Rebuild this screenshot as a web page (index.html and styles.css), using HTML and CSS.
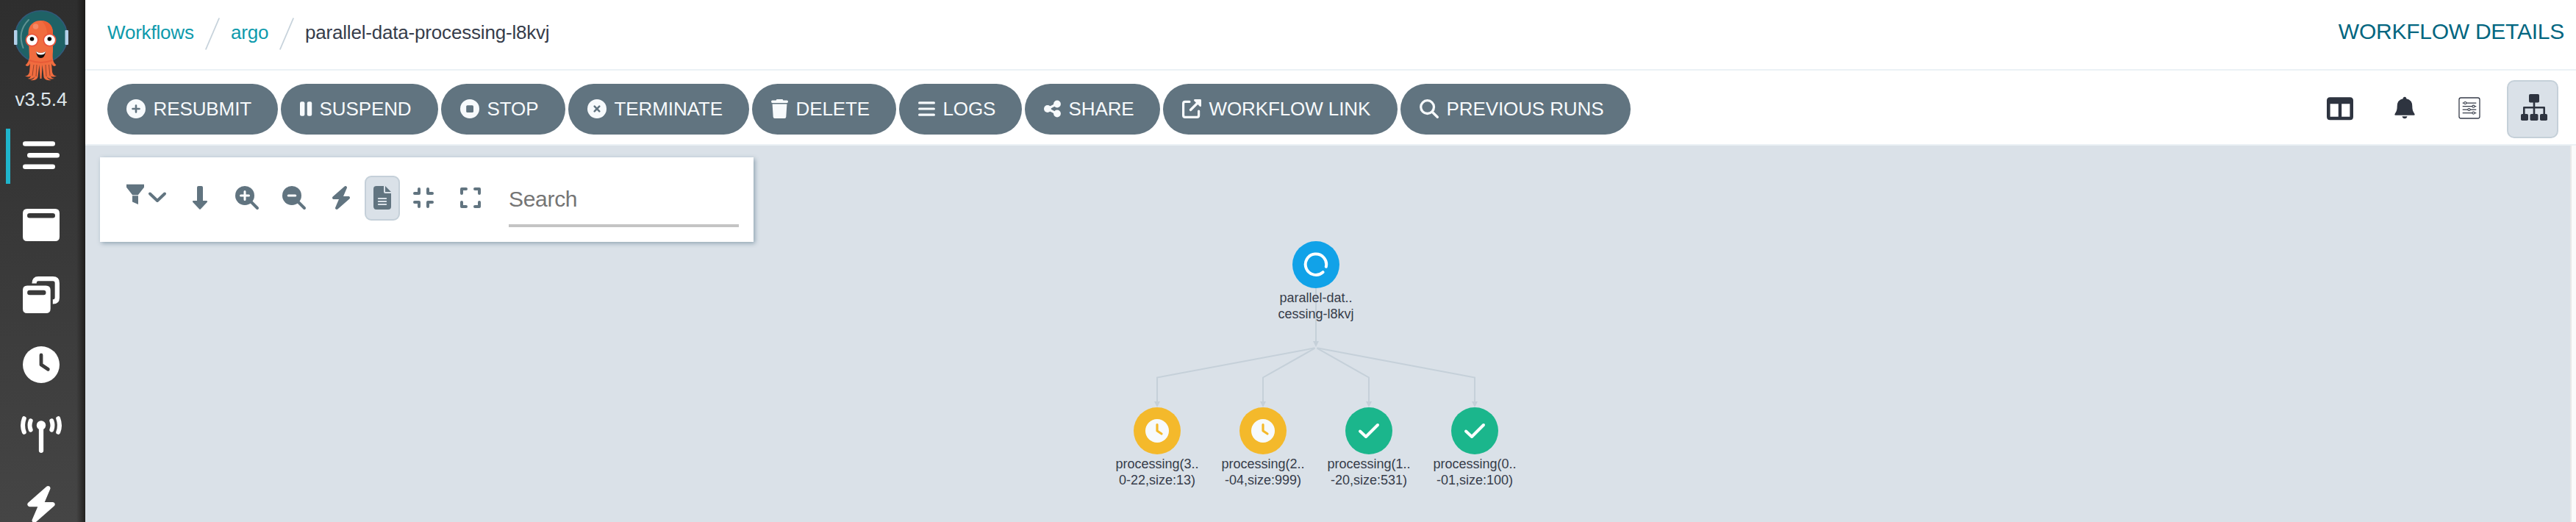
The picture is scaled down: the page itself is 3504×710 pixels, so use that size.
FILE: index.html
```html
<!DOCTYPE html>
<html lang="en">
<head>
<meta charset="utf-8">
<title>parallel-data-processing-l8kvj</title>
<link rel="stylesheet" href="styles.css">
</head>
<body>
<div class="layout">
  <aside class="sidebar">
    <svg class="logo" viewBox="0 0 112 120">
      <circle cx="56" cy="50" r="35.5" fill="#1f6266" stroke="#32597a" stroke-width="1.6"/>
      <path d="M39 27Q23 43 31.500 65" fill="none" stroke="#5f9292" stroke-width="2" stroke-linecap="round"/>
      <rect x="19" y="41" width="4.500" height="20" rx="1" fill="#b3d0ea"/>
      <rect x="88.500" y="41" width="4.500" height="20" rx="1" fill="#b3d0ea"/>
      <path d="M38.500 45C38.500 34 46 28 55.500 28S72 34 72 45V70C71 80 72 85 76.500 88.500L74.500 90Q71 90 70 86L71 98Q72 103 77 103.500Q72 105.500 69 103.500Q70 106.500 74 107Q67 108.500 63.500 104Q65 108 70 109Q62 110.500 59.500 105L57.500 88L56.500 107H54.500L53.500 88L51.500 105Q49 110.500 41 109Q46 108 47.500 104Q44 108.500 37.500 107Q41 106.500 42 103.500Q39 105.500 34 103.500Q39 103 40 98L41 86Q40 90 36.500 90L34.500 88.500Q39 85 40 78Z" fill="#f06c3f"/>
      <path d="M55.500 28Q72 29 72 45V50H64.500Q64 33 55.500 28Z" fill="#ec5f34"/>
      <path d="M40 82Q56 88 71 82" fill="none" stroke="#e85b37" stroke-width="2"/>
      <path d="M46 88L44 103M50 88L49 104M62 88L63 104M66.500 88L68 103" stroke="#98442c" stroke-width="1" fill="none"/>
      <circle cx="48.500" cy="36" r="3.800" fill="#f48a66"/>
      <circle cx="43.500" cy="54.500" r="8.200" fill="#fff" stroke="#e9533b" stroke-width="1.700"/>
      <circle cx="67.500" cy="54.500" r="8.200" fill="#fff" stroke="#e9533b" stroke-width="1.700"/>
      <circle cx="43.500" cy="53" r="2.800"/><circle cx="67.300" cy="53" r="2.800"/>
      <path d="M49 70Q55.500 74 62 70Q61 79 55.500 79T49 70Z" fill="#150d0b"/>
      <path d="M49 70Q55.500 74 62 70Q61 74.500 55.500 74.500T49 70Z" fill="#fff"/>
    </svg>
    <div class="version">v3.5.4</div>
    <nav class="nav">
      <a class="nav-item active"><svg viewBox="0 0 50 50"><path d="M3.300 9.500H40.700M9.300 25.200H46.700M3.300 40.800H40.700" stroke="#fff" stroke-width="6.600" stroke-linecap="round"/></svg></a>
      <a class="nav-item"><svg viewBox="0 0 50 50"><path fill="#fff" fill-rule="evenodd" d="M6 3H44Q50 3 50 9V41Q50 47 44 47H6Q0 47 0 41V9Q0 3 6 3ZM9.300 9A3.200 3.200 0 0 0 9.300 15.600H40.700A3.200 3.200 0 0 0 40.700 9Z"/></svg></a>
      <a class="nav-item"><svg viewBox="0 0 50 50"><path d="M15.600 9.500V9Q15.600 3.200 21 3.200H41Q46.800 3.200 46.800 9V29Q46.800 34.400 41.200 34.400H40.800" fill="none" stroke="#fff" stroke-width="6.300"/><path fill="#fff" fill-rule="evenodd" d="M6 12.500H31.500Q37.700 12.500 37.700 18.500V44Q37.700 50 31.500 50H6Q0 50 0 44V18.500Q0 12.500 6 12.500ZM9.300 18.800A3.100 3.100 0 0 0 9.300 25.200H28.300A3.100 3.100 0 0 0 28.300 18.800Z"/></svg></a>
      <a class="nav-item"><svg viewBox="0 0 50 50"><circle cx="25" cy="25" r="25" fill="#fff"/><path d="M25 12V25L34.300 31.300" fill="none" stroke="#3c3c3c" stroke-width="4.800" stroke-linecap="round" stroke-linejoin="round"/></svg></a>
      <a class="nav-item"><svg viewBox="0 0 50 50"><circle cx="25" cy="12.500" r="6.200" fill="#fff"/><path d="M25 12V46.800" stroke="#fff" stroke-width="6.300" stroke-linecap="round"/><path d="M10.700 6.400Q8.300 12.500 10.700 18.600M39.300 6.400Q41.700 12.500 39.300 18.600M1.800 3.200Q-1.700 12.500 1.800 21.800M48.200 3.200Q51.700 12.500 48.200 21.800" fill="none" stroke="#fff" stroke-width="6" stroke-linecap="round"/></svg></a>
      <a class="nav-item"><svg viewBox="-32 0 512 512"><path fill="#fff" d="M349.400 44.600c5.900-13.700 1.500-29.700-10.600-38.500s-28.600-8-39.900 1.800l-256 224c-10 8.800-13.600 22.900-8.900 35.300S50.700 288 64 288H175.500L98.600 467.400c-5.900 13.700-1.500 29.700 10.600 38.500s28.600 8 39.900-1.800l256-224c10-8.800 13.600-22.900 8.900-35.300s-16.600-20.700-30-20.700H272.500L349.400 44.600z"/></svg></a>
    </nav>
  </aside>
  <main class="main">
    <header class="topbar">
      <div class="crumbs">
        <a class="crumb crumb-root">Workflows</a>
        <svg class="slash" viewBox="0 0 20 44"><path d="M.800 43.500L19.200.500" stroke="#c6d2db" stroke-width="1.800"/></svg>
        <a class="crumb crumb-ns">argo</a>
        <svg class="slash" viewBox="0 0 20 44"><path d="M.800 43.500L19.200.500" stroke="#c6d2db" stroke-width="1.800"/></svg>
        <span class="crumb current">parallel-data-processing-l8kvj</span>
      </div>
      <div class="title">WORKFLOW DETAILS</div>
    </header>
    <div class="toolbar">
      <div class="actions">
        <button class="btn resubmit"><svg viewBox="0 0 26 26"><circle cx="13" cy="13" r="13"/><path class="cut" d="M13 8.500V17.500M8.500 13H17.500"/></svg><span>RESUBMIT</span></button>
        <button class="btn suspend"><svg class="w16" viewBox="0 0 16 26"><rect x="0" y="3.200" width="6.400" height="19.600" rx="2.200"/><rect x="9.800" y="3.200" width="6.400" height="19.600" rx="2.200"/></svg><span>SUSPEND</span></button>
        <button class="btn stop"><svg viewBox="0 0 26 26"><circle cx="13" cy="13" r="13"/><rect x="8.200" y="8.200" width="9.800" height="9.800" rx="1.600" fill="#617480"/></svg><span>STOP</span></button>
        <button class="btn terminate"><svg viewBox="0 0 26 26"><circle cx="13" cy="13" r="13"/><path class="cut" d="M9.700 9.700L16.300 16.300M16.300 9.700L9.700 16.300"/></svg><span>TERMINATE</span></button>
        <button class="btn delete"><svg class="w23" viewBox="0 0 23 26"><path d="M7.500 0H15.500L16.400 1.600H21.500Q23 1.600 23 3.300T21.500 5H1.500Q0 5 0 3.300T1.500 1.600H6.600ZM1.600 6.500H21.400L20.300 24Q20.100 26 18.200 26H4.800Q2.900 26 2.700 24Z"/></svg><span>DELETE</span></button>
        <button class="btn logs"><svg class="w23" viewBox="0 0 23 26"><path d="M1.600 4.900H21.400M1.600 13H21.400M1.600 21.200H21.400" stroke="#f7fafc" stroke-width="3.200" stroke-linecap="round"/></svg><span>LOGS</span></button>
        <button class="btn share"><svg class="w23" viewBox="0 0 23 26"><path d="M18 6.200L5 13L18 19.800" fill="none" stroke="#f7fafc" stroke-width="3.200"/><circle cx="18" cy="6.500" r="4.900"/><circle cx="4.900" cy="13" r="4.900"/><circle cx="18" cy="19.500" r="4.900"/></svg><span>SHARE</span></button>
        <button class="btn link"><svg viewBox="0 0 26 26"><path d="M10 3.400H4Q1.600 3.400 1.600 5.800V22Q1.600 24.400 4 24.400H20.200Q22.600 24.400 22.600 22V16" fill="none" stroke="#f7fafc" stroke-width="3.200" stroke-linecap="round"/><path d="M11.500 14.500L22 4" stroke="#f7fafc" stroke-width="3.300" stroke-linecap="round"/><path d="M17 0H24.600Q26 0 26 1.400V9Q25.600 10.800 24 9.800L16.200 2Q15.400.400 17 0Z"/></svg><span>WORKFLOW LINK</span></button>
        <button class="btn previous"><svg viewBox="0 0 26 26"><circle cx="10.600" cy="10.600" r="8.900" fill="none" stroke="#f7fafc" stroke-width="3.300"/><path d="M17.200 17.200L24.300 24.300" stroke="#f7fafc" stroke-width="3.400" stroke-linecap="round"/></svg><span>PREVIOUS RUNS</span></button>
      </div>
      <div class="views">
        <a class="view"><svg viewBox="0 0 36 36"><path fill-rule="evenodd" d="M4.500 2.300H31.500Q36 2.300 36 6.800V28.700Q36 33.200 31.500 33.200H4.500Q0 33.200 0 28.700V6.800Q0 2.300 4.500 2.300ZM4.600 11.200V28.700H15.800V11.200ZM20.200 11.200V28.700H31.400V11.200Z"/></svg></a>
        <a class="view"><svg viewBox="0 0 36 36"><path d="M18 1.700Q20.300 1.700 20.300 4.300Q28.300 6 28.300 14.500Q28.300 20 30 22.500L31.600 25.200Q32 26.700 30.500 26.700H5.500Q4 26.700 4.400 25.200L6 22.500Q7.700 20 7.700 14.500Q7.700 6 15.700 4.300Q15.700 1.700 18 1.700ZM14.500 28.300H21.500Q20.800 31.300 18 31.300T14.500 28.300Z"/></svg></a>
        <a class="view"><svg viewBox="0 0 36 36"><rect x="4" y="3" width="28" height="28" rx="2.500" fill="none" stroke="#373d4a" stroke-width="1.300"/><path d="M8.700 10.100H27.300M8.700 14.700H27.300M8.700 19.100H27.300M8.700 23.600H27.300" fill="none" stroke="#373d4a" stroke-width="1.300"/><g fill="#fff" stroke="#373d4a" stroke-width="1.100"><circle cx="12.300" cy="10.100" r="1.600"/><circle cx="23.500" cy="14.700" r="1.600"/><circle cx="17.500" cy="19.100" r="1.600"/><circle cx="23.500" cy="23.600" r="1.600"/></g></svg></a>
        <a class="view selected"><svg viewBox="0 0 36 36"><rect x="11" y="0" width="14" height="11.500" rx="1.800"/><rect x="0" y="27" width="10" height="9" rx="1.800"/><rect x="12.500" y="27" width="11" height="9" rx="1.800"/><rect x="26" y="27" width="10" height="9" rx="1.800"/><path d="M18 10V28M4.300 28V18.200H31.700V28" fill="none" stroke="#2e3440" stroke-width="2.600" stroke-linejoin="round"/></svg></a>
      </div>
    </div>
    <div class="canvas">
      <svg class="graph" viewBox="0 0 3380 512">
        <g transform="translate(-116 -198)">
          <g class="edges">
            <path d="M1790 392V466"/>
            <path d="M1788.500 473.300L1574 513.500V547"/>
            <path d="M1788.500 473.700L1718 513.500V547"/>
            <path d="M1791.500 473.700L1862 513.500V547"/>
            <path d="M1791.500 473.300L2006 513.500V547"/>
          </g>
          <path class="heads" d="M1786 464h8l-4 8zM1570 546h8l-4 8zM1714 546h8l-4 8zM1858 546h8l-4 8zM2002 546h8l-4 8z"/>
          <circle cx="1790" cy="360" r="32" fill="#11a2e8"/>
          <path d="M1803.800 362.800A14.200 14.200 0 1 0 1799.500 370.200" fill="none" stroke="#fff" stroke-width="4" stroke-linecap="round"/>
          <g fill="#f4b92b"><circle cx="1574" cy="586" r="32"/><circle cx="1718" cy="586" r="32"/></g>
          <g fill="#f7fafc"><circle cx="1574" cy="586" r="16"/><circle cx="1718" cy="586" r="16"/></g>
          <path d="M1574 577.500V586L1580 590M1718 577.500V586L1724 590" fill="none" stroke="#f4b92b" stroke-width="3.200" stroke-linecap="round" stroke-linejoin="round"/>
          <g fill="#1bb68c"><circle cx="1862" cy="586" r="32"/><circle cx="2006" cy="586" r="32"/></g>
          <path d="M1850 586.500L1858 594L1874 578M1994 586.500L2002 594L2018 578" fill="none" stroke="#fff" stroke-width="4" stroke-linecap="round" stroke-linejoin="round"/>
          <g class="labels">
            <text x="1790" y="411">parallel-dat..</text><text x="1790" y="433">cessing-l8kvj</text>
            <text x="1574" y="637">processing(3..</text><text x="1574" y="659">0-22,size:13)</text>
            <text x="1718" y="637">processing(2..</text><text x="1718" y="659">-04,size:999)</text>
            <text x="1862" y="637">processing(1..</text><text x="1862" y="659">-20,size:531)</text>
            <text x="2006" y="637">processing(0..</text><text x="2006" y="659">-01,size:100)</text>
          </g>
        </g>
      </svg>
      <div class="panel">
        <a class="tool filter"><svg viewBox="0 0 54 32"><path d="M0-2.200H24V1.800L15.800 12.200H8.200L0 1.800ZM8 13.200H16V25L8 21.500Z"/><path d="M32 10.500L42 20L52 10.500" fill="none" stroke="#617480" stroke-width="4" stroke-linecap="round" stroke-linejoin="round"/></svg></a>
        <a class="tool"><svg viewBox="0 0 32 32"><path d="M14 0H18Q20 0 20 2V20H24.800Q27 20.200 25.500 22.300L17 31.300Q16 32.400 15 31.300L6.500 22.300Q5 20.200 7.200 20H12V2Q12 0 14 0Z"/></svg></a>
        <a class="tool"><svg viewBox="0 0 32 32"><circle cx="13" cy="13" r="13"/><path d="M21 21L30 30" stroke="#617480" stroke-width="4" stroke-linecap="round"/><path d="M13 7.500V18.500M7.500 13H18.500" stroke="#fff" stroke-width="3" stroke-linecap="round"/></svg></a>
        <a class="tool"><svg viewBox="0 0 32 32"><circle cx="13" cy="13" r="13"/><path d="M21 21L30 30" stroke="#617480" stroke-width="4" stroke-linecap="round"/><path d="M8.300 13H17.700" stroke="#fff" stroke-width="3.200" stroke-linecap="round"/></svg></a>
        <a class="tool tight"><svg viewBox="-32 0 512 512"><path d="M349.400 44.600c5.900-13.700 1.500-29.700-10.600-38.500s-28.600-8-39.900 1.800l-256 224c-10 8.800-13.600 22.900-8.900 35.300S50.700 288 64 288H175.500L98.600 467.400c-5.900 13.700-1.500 29.700 10.600 38.500s28.600 8 39.900-1.800l256-224c10-8.800 13.600-22.900 8.900-35.300s-16.600-20.700-30-20.700H272.500L349.400 44.600z"/></svg></a>
        <a class="tool tight selected"><svg viewBox="0 0 24 32"><path d="M4 0H14V8Q14 10 16 10H24V28Q24 32 20 32H4Q0 32 0 28V4Q0 0 4 0ZM16 0L24 8H16Z"/><path d="M6.800 17H17.200M6.800 21H17.200M6.800 25H17.200" stroke="#dae1e8" stroke-width="2" stroke-linecap="round"/></svg></a>
        <a class="tool"><svg viewBox="0 0 32 32"><path class="line" d="M10 4V10H4M22 4V10H28M10 28V22H4M22 28V22H28"/></svg></a>
        <a class="tool"><svg viewBox="0 0 32 32"><path class="line" d="M10 4H4V10M22 4H28V10M10 28H4V22M22 28H28V22"/></svg></a>
        <div class="search">Search</div>
      </div>
    </div>
  </main>
  <div class="scrollbar"></div>
</div>
</body>
</html>
```
FILE: styles.css
```css
* { box-sizing: border-box; }
body {
  margin: 0;
  overflow: hidden;
  background: #fff;
  color: #363c4a;
  font-family: "Liberation Sans", Arial, sans-serif;
  font-size: 26px;
  line-height: 30px;
}
svg { display: block; flex: none; overflow: visible; }
.layout { position: relative; display: flex; height: 710px; }
.sidebar {
  width: 116px;
  flex: none;
  height: 710px;
  overflow: hidden;
  background: linear-gradient(90deg, transparent 104px, rgba(22, 20, 18, .75) 116px), linear-gradient(#2e2e2e, #454545);
}
.logo { width: 112px; height: 120px; }
.version { width: 112px; text-align: center; color: #dee6eb; }
.nav { display: flex; flex-direction: column; padding-top: 13.5px; }
.nav-item { position: relative; height: 95px; flex: none; display: flex; align-items: center; padding-left: 31px; }
.nav-item svg { width: 50px; height: 50px; }
.nav-item.active::before { content: ""; position: absolute; left: 8px; top: 11.5px; width: 6px; height: 75px; background: #1fb5cc; }

.main { flex: 1; min-width: 0; display: flex; flex-direction: column; }
.topbar { height: 96px; flex: none; display: flex; justify-content: space-between; align-items: flex-start; border-bottom: 2px solid #ebf1f5; padding: 24px 16px 0 30px; }
.crumbs { display: flex; gap: 15px; }
.crumb { padding-top: 5px; color: #0d9aac; white-space: nowrap; letter-spacing: -.19px; }
.crumb-root { width: 118px; }
.crumb-ns { width: 51px; }
.crumb.current { color: #363c4a; }
.slash { width: 20px; height: 44px; }
.title { padding-top: 4px; font-size: 30px; color: #026680; letter-spacing: -.25px; }

.toolbar { height: 102px; flex: none; display: flex; justify-content: space-between; border-bottom: 2px solid #ebf1f5; padding: 13px 24px 0 30px; }
.actions { display: flex; gap: 4px; padding-top: 5px; }
.btn { height: 69px; border: 0; border-radius: 35px; background: #617480; color: #f7fafc; font: inherit; letter-spacing: -.1px; display: flex; align-items: center; gap: 10.5px; padding: 0 0 0 26px; white-space: nowrap; }
.btn svg { width: 26px; height: 26px; fill: #f7fafc; margin-top: -2px; }
.btn span { margin-top: -1px; }
.btn svg.w16 { width: 16px; }
.btn svg.w23 { width: 23px; }
.btn .cut { fill: none; stroke: #617480; stroke-width: 2.6; stroke-linecap: round; }
.resubmit { width: 232px; }
.suspend { width: 214px; }
.stop { width: 169px; }
.terminate { width: 246px; }
.delete { width: 196px; }
.logs { width: 167px; }
.share { width: 184px; }
.link { width: 319px; }
.previous { width: 313px; }
.views { display: flex; gap: 18px; }
.view { width: 70px; height: 79px; border: 2px solid transparent; border-radius: 10px; padding: 19px 0 0 17px; }
.view svg { width: 36px; height: 36px; fill: #2e3440; }
.view.selected { background: #dae1e8; border-color: #c5d0d9; padding-top: 17px; }

.canvas { position: relative; flex: 1; background: #dae1e8; padding: 16px 20px; }
.graph { position: absolute; left: 0; top: 0; width: 3380px; height: 512px; }
.edges path { fill: none; stroke: #c5d0d9; stroke-width: 2; }
.heads { fill: #c5d0d9; }
.labels { font-size: 18px; fill: #363c4a; text-anchor: middle; }
.panel { position: relative; width: 889px; height: 115px; background: #fff; box-shadow: 2px 2px 6px #8fa4b1; display: flex; align-items: flex-start; padding: 25px 20px 0 26px; }
.tool { width: 48px; height: 61px; flex: none; margin-right: 16px; border: 2px solid transparent; border-radius: 9px; padding-top: 12px; display: flex; justify-content: center; align-items: flex-start; }
.tool.tight { margin-right: 8px; }
.tool svg { width: 32px; height: 32px; fill: #617480; }
.tool.filter { width: 78px; margin-right: 8px; justify-content: flex-start; padding-left: 8px; }
.tool.filter svg { width: 54px; }
.tool.selected { background: #dae1e8; border-color: #c5d0d9; }
.tool.selected svg { width: 24px; }
.tool .line { fill: none; stroke: #617480; stroke-width: 4; stroke-linecap: round; stroke-linejoin: round; }
.search { width: 313px; height: 70px; flex: none; margin-left: 12px; border-bottom: 4px solid #c4c4c4; color: #757575; font-size: 30px; letter-spacing: -.3px; padding: 17px 0 0; }

.scrollbar { width: 8px; flex: none; margin-top: 198px; border-left: 2px solid #e8e8e8; background: #fafafa; }
.topbar, .toolbar { margin-right: -8px; }
```
